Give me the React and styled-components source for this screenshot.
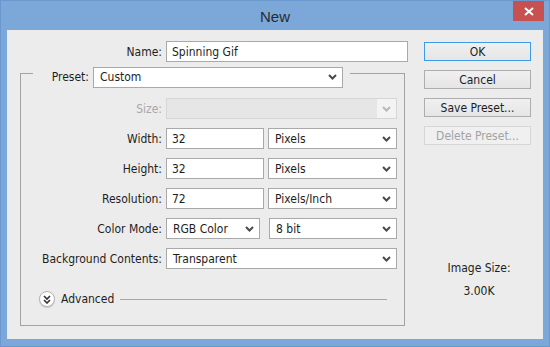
import React from 'react'
import styled, { createGlobalStyle } from 'styled-components'

const GlobalStyle = createGlobalStyle`
  html, body {
    margin: 0;
    padding: 0;
    background: #7ba7d9;
  }
  * {
    box-sizing: border-box;
  }
`

const Window = styled.div`
  width: 550px;
  height: 347px;
  background: #7ba7d9;
  border: 1px solid #6a98ce;
  display: flex;
  flex-direction: column;
  font-family: "DejaVu Sans Condensed", "Liberation Sans", sans-serif;
  font-size: 12px;
  color: #1e1e1e;
`

const TitleBar = styled.div`
  height: 29px;
  display: grid;
  grid-template-columns: 1fr auto 1fr;
  flex-shrink: 0;
`

const Title = styled.div`
  grid-column: 2;
  align-self: center;
  font-family: "Liberation Sans", sans-serif;
  font-size: 15px;
  color: #2b2b2b;
  padding-top: 1px;
`

const CloseButton = styled.div`
  grid-column: 3;
  justify-self: end;
  width: 31px;
  height: 20px;
  margin-right: 5px;
  background: #c75050;
  display: flex;
  align-items: center;
  justify-content: center;
`

const Client = styled.div`
  flex: 1;
  margin: 0 6px 7px 6px;
  background: #ececec;
  display: flex;
  padding: 11px 0 0 13px;
`

const MainColumn = styled.div`
  width: 388px;
  display: flex;
  flex-direction: column;
`

const Row = styled.div`
  display: flex;
  align-items: center;
  height: 21px;
`

const Label = styled.div`
  width: ${p => p.$w || 141}px;
  margin-right: 4px;
  text-align: right;
  white-space: nowrap;
  color: ${p => (p.$disabled ? '#a8a8a8' : '#1e1e1e')};
`

const TextField = styled.div`
  width: ${p => p.$w}px;
  height: 21px;
  background: #fff;
  border: 1px solid #a9a9a9;
  padding: 0 5px;
  display: flex;
  align-items: center;
`

const SelectBox = styled.div`
  width: ${p => p.$w}px;
  height: ${p => p.$h || 21}px;
  margin-left: ${p => p.$ml || 0}px;
  background: #fff;
  border: 1px solid #a9a9a9;
  padding: 0 0 0 6px;
  display: flex;
  align-items: center;
  justify-content: space-between;
`

const DisabledSelect = styled.div`
  width: 231px;
  height: 21px;
  background: #f3f3f3;
  border: 1px solid #d6d6d6;
  display: flex;
`

const DisabledField = styled.div`
  flex: 1;
  background: #e6e6e6;
  border-right: 1px solid #f3f3f3;
`

const ArrowCell = styled.div`
  width: 18px;
  display: flex;
  align-items: center;
  justify-content: center;
  padding-right: 2px;
`

const Group = styled.div`
  margin-top: 11px;
  width: 385px;
  height: 253px;
  border: 1px solid #a3a3a3;
  display: flex;
  flex-direction: column;
`

const Legend = styled.div`
  display: flex;
  align-items: center;
  align-self: flex-start;
  margin: -9px 0 0 12px;
  padding-right: 7px;
  height: 24px;
  background: #ececec;
`

const Fields = styled.div`
  display: flex;
  flex-direction: column;
  gap: 9px;
  margin-top: 9px;
`

const AdvancedRow = styled.div`
  display: flex;
  align-items: center;
  margin: 22px 0 0 18px;
  height: 16px;
`

const AdvancedButton = styled.div`
  width: 16px;
  height: 16px;
  border-radius: 50%;
  background: #fff;
  border: 1px solid #b4b4b4;
  box-shadow: 0 1px 1px rgba(0, 0, 0, 0.15);
  display: flex;
  align-items: center;
  justify-content: center;
`

const AdvancedText = styled.span`
  margin-left: 6px;
`

const Rule = styled.div`
  flex: 0 0 267px;
  height: 1px;
  margin-left: 6px;
  background: #a8a8a8;
`

const SideColumn = styled.div`
  margin-left: 16px;
  width: 107px;
  display: flex;
  flex-direction: column;
  gap: 9px;
  padding-top: 1px;
`

const Button = styled.div`
  height: 19px;
  display: flex;
  align-items: center;
  justify-content: center;
  background: linear-gradient(#efefef, #e3e3e3);
  border: 1px solid ${p => (p.$default ? '#3c9ae6' : p.$disabled ? '#d6d6d6' : '#adadad')};
  color: ${p => (p.$disabled ? '#a3a3a3' : '#1e1e1e')};
  background: ${p => (p.$disabled ? '#f0f0f0' : 'linear-gradient(#f0f0f0, #e5e5e5)')};
`

const SizeInfo = styled.div`
  margin-top: 107px;
  display: flex;
  flex-direction: column;
  align-items: center;
  gap: 9px;
  padding-left: 3px;
`

function Chevron({ color = '#4a4a4a' }) {
  return (
    <svg width="9" height="6" viewBox="0 0 9 6">
      <polyline points="1,1 4.5,4.5 8,1" fill="none" stroke={color} strokeWidth="2" />
    </svg>
  )
}

function Select({ value, w, ml }) {
  return (
    <SelectBox $w={w} $ml={ml}>
      <span>{value}</span>
      <ArrowCell>
        <Chevron />
      </ArrowCell>
    </SelectBox>
  )
}

function DoubleChevron() {
  return (
    <svg width="8" height="9" viewBox="0 0 8 9">
      <polyline points="1,1 4,4 7,1" fill="none" stroke="#333" strokeWidth="1.6" />
      <polyline points="1,5 4,8 7,5" fill="none" stroke="#333" strokeWidth="1.6" />
    </svg>
  )
}

export default function App() {
  return (
    <>
      <GlobalStyle />
      <Window>
        <TitleBar>
          <Title>New</Title>
          <CloseButton>
            <svg width="10" height="9" viewBox="0 0 10 9">
              <path d="M1 1 L9 8 M9 1 L1 8" stroke="#fff" strokeWidth="2" />
            </svg>
          </CloseButton>
        </TitleBar>
        <Client>
          <MainColumn>
            <Row>
              <Label $w={142}>Name:</Label>
              <TextField $w={242}>Spinning Gif</TextField>
            </Row>
            <Group>
              <Legend>
                <Label $w={56}>Preset:</Label>
                <Select value="Custom" w={250} />
              </Legend>
              <Fields>
                <Row>
                  <Label $disabled>Size:</Label>
                  <DisabledSelect>
                    <DisabledField />
                    <ArrowCell>
                      <Chevron color="#b9b9b9" />
                    </ArrowCell>
                  </DisabledSelect>
                </Row>
                <Row>
                  <Label>Width:</Label>
                  <TextField $w={98}>32</TextField>
                  <Select value="Pixels" w={129} ml={4} />
                </Row>
                <Row>
                  <Label>Height:</Label>
                  <TextField $w={98}>32</TextField>
                  <Select value="Pixels" w={129} ml={4} />
                </Row>
                <Row>
                  <Label>Resolution:</Label>
                  <TextField $w={98}>72</TextField>
                  <Select value="Pixels/Inch" w={129} ml={4} />
                </Row>
                <Row>
                  <Label>Color Mode:</Label>
                  <Select value="RGB Color" w={94} />
                  <Select value="8 bit" w={128} ml={9} />
                </Row>
                <Row>
                  <Label>Background Contents:</Label>
                  <Select value="Transparent" w={231} />
                </Row>
              </Fields>
              <AdvancedRow>
                <AdvancedButton>
                  <DoubleChevron />
                </AdvancedButton>
                <AdvancedText>Advanced</AdvancedText>
                <Rule />
              </AdvancedRow>
            </Group>
          </MainColumn>
          <SideColumn>
            <Button $default>OK</Button>
            <Button>Cancel</Button>
            <Button>Save Preset...</Button>
            <Button $disabled>Delete Preset...</Button>
            <SizeInfo>
              <span>Image Size:</span>
              <span>3.00K</span>
            </SizeInfo>
          </SideColumn>
        </Client>
      </Window>
    </>
  )
}
